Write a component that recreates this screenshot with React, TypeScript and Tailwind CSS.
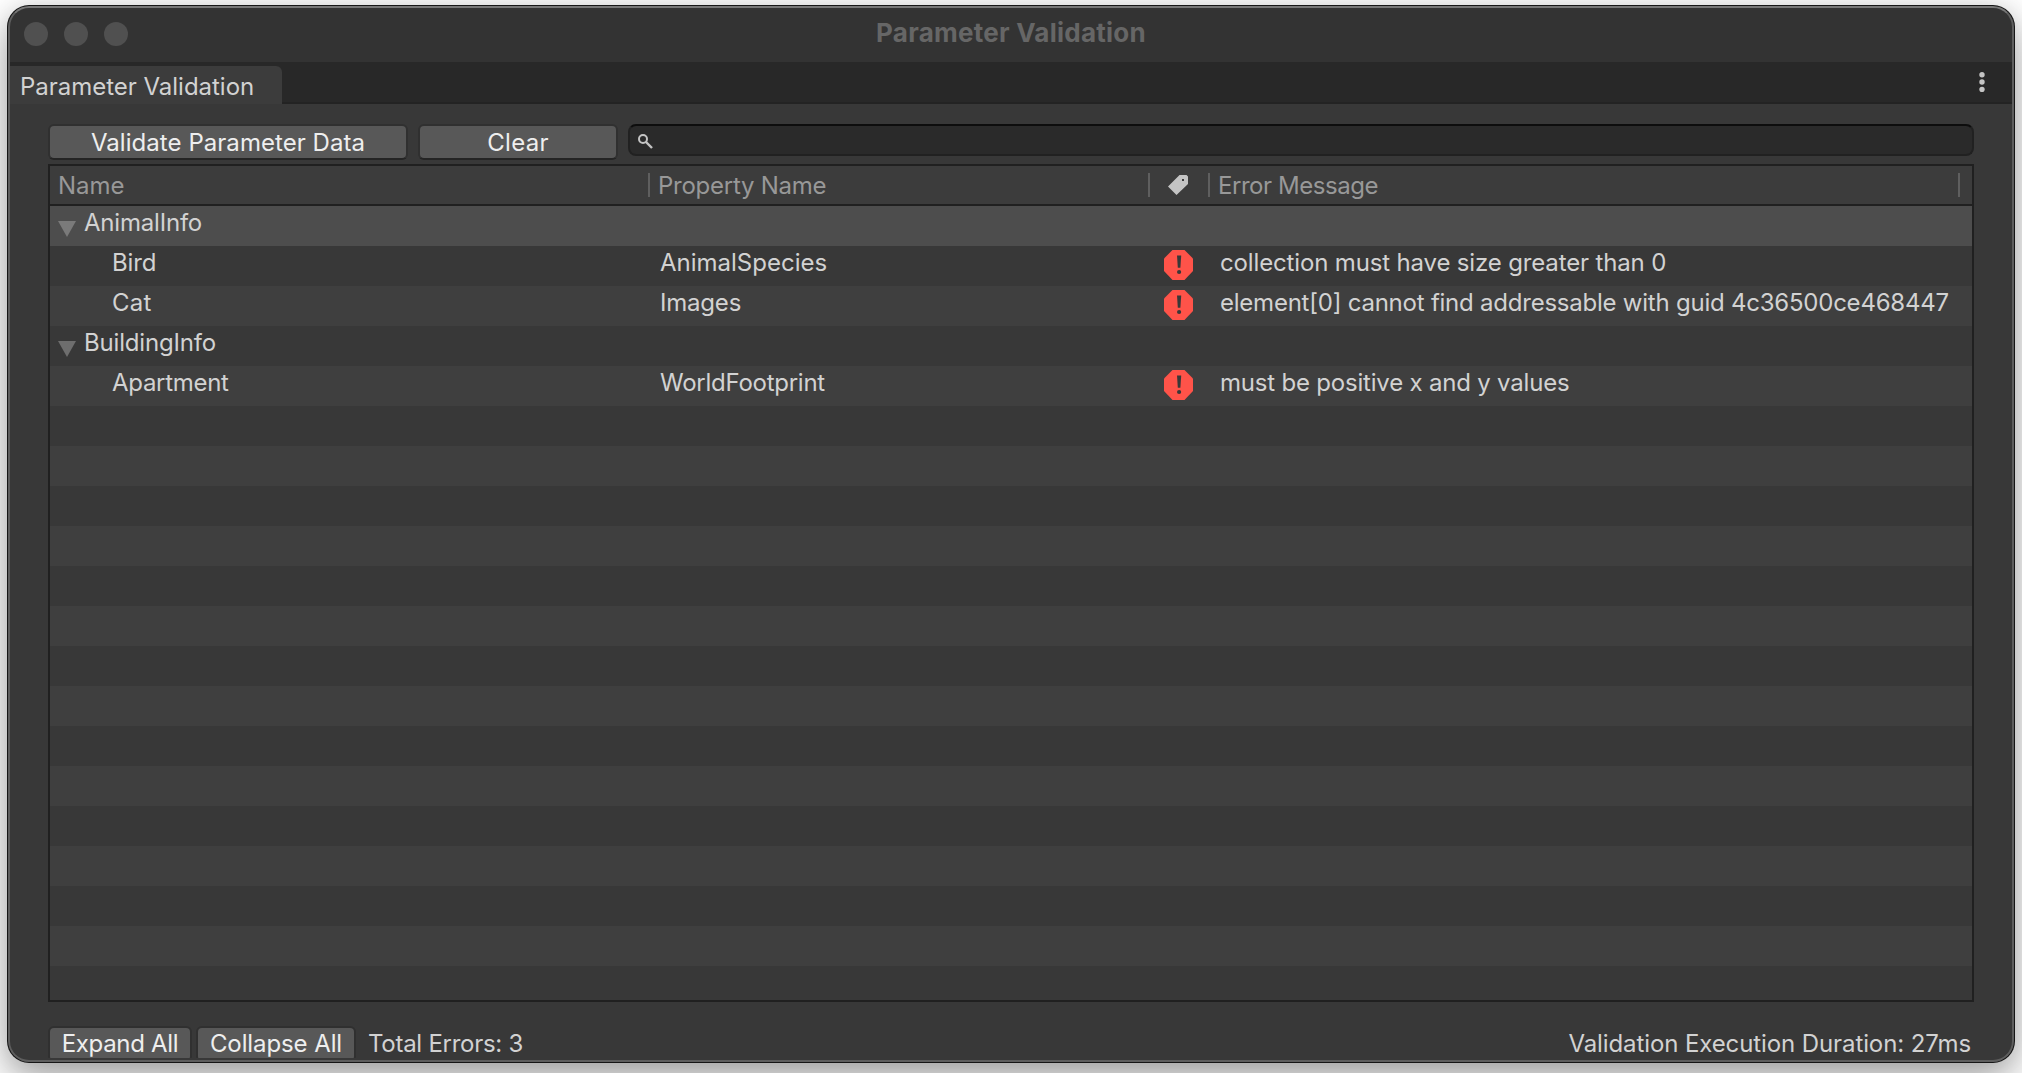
import React from "react";

type Cell = { text: string; tracking: string };
type Row = { name: Cell; property?: Cell; error?: Cell; group?: boolean };

const rows: Row[] = [
  { name: { text: "AnimalInfo", tracking: "tracking-[-0.2px]" }, group: true },
  {
    name: { text: "Bird", tracking: "tracking-[-0.1px]" },
    property: { text: "AnimalSpecies", tracking: "tracking-[0px]" },
    error: { text: "collection must have size greater than 0", tracking: "tracking-[-0.15px]" },
  },
  {
    name: { text: "Cat", tracking: "tracking-[0.3px]" },
    property: { text: "Images", tracking: "tracking-[-0.2px]" },
    error: { text: "element[0] cannot find addressable with guid 4c36500ce468447", tracking: "tracking-[-0.23px]" },
  },
  { name: { text: "BuildingInfo", tracking: "tracking-[-0.18px]" }, group: true },
  {
    name: { text: "Apartment", tracking: "tracking-[-0.3px]" },
    property: { text: "WorldFootprint", tracking: "tracking-[-0.26px]" },
    error: { text: "must be positive x and y values", tracking: "tracking-[-0.2px]" },
  },
];

const ROW_COUNT = 20;

function ErrorIcon() {
  return (
    <svg width="29" height="30" viewBox="0 0 29 30" className="block">
      <path d="M8.5 0h12L29 8.5v12.5L20.5 30h-12L0 21V8.5z" fill="#ff5349" />
      <path d="M13 5.6h4.2l-.8 12.2h-2.6z" fill="#383838" />
      <circle cx="15.1" cy="22" r="2.1" fill="#383838" />
    </svg>
  );
}

function TagIcon() {
  return (
    <svg width="20" height="20" viewBox="0 0 20 20" className="block">
      <path
        fillRule="evenodd"
        d="M11.500 0H18.500L20 1.500V9L8.500 20L0 11.500z M14 4v2h2V4z"
        fill="#c4c4c4"
      />
    </svg>
  );
}

function Button({ children, className }: { children: React.ReactNode; className: string }) {
  return (
    <button
      className={`flex shrink-0 items-start justify-center rounded-[6px] border-2 border-[#303030] border-b-[#242424] bg-[#585858] text-[#eeeeee] whitespace-nowrap ${className}`}
    >
      {children}
    </button>
  );
}

function Separator() {
  return <div className="h-6 w-0.5 shrink-0 bg-[#5f5f5f]" />;
}

function TableRow({ row, index }: { row?: Row; index: number }) {
  const bg = index === 0 ? "bg-[#4d4d4d]" : index % 2 ? "bg-[#383838]" : "bg-[#3f3f3f]";
  return (
    <div className={`flex h-10 shrink-0 leading-[34px] text-[#d2d2d2] ${bg}`}>
      {row && (
        <>
          <div className={`flex w-[610px] shrink-0 ${row.group ? "pl-2" : "pl-[62px]"}`}>
            {row.group && (
              <svg width="18" height="16" viewBox="0 0 18 16" className="mt-[15px] mr-2 block">
                <path d="M0 0h18L9 16z" fill={index === 0 ? "#7a7a7a" : "#6e6e6e"} />
              </svg>
            )}
            <span className={row.name.tracking}>{row.name.text}</span>
          </div>
          <div className={`w-[504px] shrink-0 ${row.property?.tracking ?? ""}`}>{row.property?.text}</div>
          <div className="w-[56px] shrink-0 pt-1">{row.error && <ErrorIcon />}</div>
          <div className={`w-[732px] shrink-0 whitespace-nowrap ${row.error?.tracking ?? ""}`}>
            {row.error?.text}
          </div>
        </>
      )}
    </div>
  );
}

export default function App() {
  return (
    <div className="h-[1073px] w-[2022px] overflow-hidden bg-white pt-[5px] pl-[7px] font-['Inter',sans-serif] text-[24px]">
      <div className="h-[1058px] w-[2008px] rounded-[22px] bg-[#161616] p-px shadow-[0_16px_40px_rgba(0,0,0,0.36),0_0_20px_rgba(0,0,0,0.07)]">
        <div className="relative flex h-full flex-col overflow-hidden rounded-[21px] bg-[#383838]">
          <header className="flex h-14 shrink-0 items-start justify-between bg-[#333333]">
            <div className="flex w-[300px] gap-4 pt-4 pl-4">
              <div className="size-6 rounded-full bg-[#505050]" />
              <div className="size-6 rounded-full bg-[#505050]" />
              <div className="size-6 rounded-full bg-[#505050]" />
            </div>
            <h1 className="mt-[10px] text-[26px] leading-[34px] font-bold tracking-[0.25px] text-[#666666]">
              Parameter Validation
            </h1>
            <div className="w-[300px]" />
          </header>

          <nav className="flex h-[42px] shrink-0 items-start justify-between border-b-2 border-[#232323] bg-[#282828]">
            <div className="mt-1 h-[38px] w-[274px] rounded-tr-[6px] bg-[#3c3c3c] pl-3 leading-[41px] tracking-[-0.02px] text-[#d2d2d2]">
              Parameter Validation
            </div>
            <svg width="6" height="20" viewBox="0 0 6 20" className="mt-[10px] mr-[29px] block">
              <circle cx="3" cy="2.700" r="2.700" fill="#c4c4c4" />
              <circle cx="3" cy="10" r="2.700" fill="#c4c4c4" />
              <circle cx="3" cy="17.500" r="2.700" fill="#c4c4c4" />
            </svg>
          </nav>

          <div className="mt-5 ml-10 flex h-9 shrink-0 items-start gap-[10px]">
            <Button className="h-9 w-[360px] leading-[34px] tracking-[0.05px]">Validate Parameter Data</Button>
            <Button className="h-9 w-[200px] leading-[34px] tracking-[0.3px]">Clear</Button>
            <div className="h-8 w-[1346px] rounded-[8px] border-2 border-[#212121] border-t-[#0d0d0d] bg-[#2a2a2a] pt-2 pl-2">
              <svg width="15" height="15" viewBox="0 0 15 15" className="block" fill="none" stroke="#c4c4c4">
                <circle cx="5" cy="5" r="4" strokeWidth="2" />
                <path d="M8 8l6 6" strokeWidth="2.400" />
              </svg>
            </div>
          </div>

          <main className="mt-1 ml-10 flex h-[838px] w-[1926px] shrink-0 flex-col overflow-hidden border-2 border-[#202020]">
            <div className="flex h-10 shrink-0 items-center border-b-2 border-[#202020] bg-[#3c3c3c] text-[#989898]">
              <div className="w-[598px] pt-0.5 pl-2 tracking-[0px]">Name</div>
              <Separator />
              <div className="w-[498px] pt-0.5 pl-2 tracking-[-0.25px]">Property Name</div>
              <Separator />
              <div className="w-[58px] pl-[18px]">
                <TagIcon />
              </div>
              <Separator />
              <div className="w-[748px] pt-0.5 pl-2 tracking-[-0.45px]">Error Message</div>
              <Separator />
            </div>
            {Array.from({ length: ROW_COUNT }, (_, i) => (
              <TableRow key={i} row={rows[i]} index={i} />
            ))}
          </main>

          <footer className="mt-6 mr-[43px] ml-10 flex h-8 shrink-0 items-start overflow-hidden leading-[36px] text-[#d2d2d2]">
            <Button className="h-9 w-[144px] leading-[32px] tracking-[-0.32px]">Expand All</Button>
            <Button className="ml-1 h-9 w-[160px] leading-[32px] tracking-[-0.1px]">Collapse All</Button>
            <span className="ml-3 tracking-[-0.27px]">Total Errors: 3</span>
            <span className="ml-auto tracking-[-0.1px]">Validation Execution Duration: 27ms</span>
          </footer>
          <div className="pointer-events-none absolute inset-0 rounded-[21px] border-2 border-[#5e5e5e] border-t-[#777777]" />
        </div>
      </div>
    </div>
  );
}
